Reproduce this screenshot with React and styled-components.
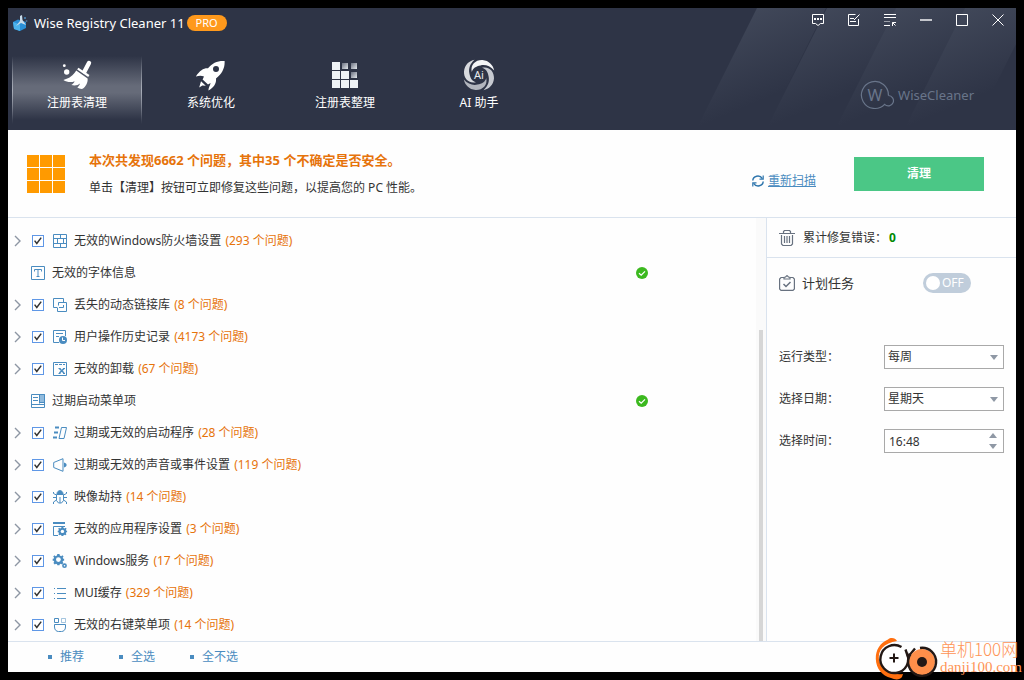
import React, { useState } from "react";
import styled, { createGlobalStyle, ThemeProvider, css } from "styled-components";

const theme = {
  colorHeader: "#2e3446",
  colorText: "#333333",
  colorOrange: "#e6730a",
  colorBlue: "#4a8cc0",
  colorLine: "#dae3ee",
  colorGreen: "#4bc786",
  colorGrey: "#687280",
  font: '"Noto Sans", "Noto Sans CJK SC", sans-serif',
};

const ITEMS = [
  { id: "firewall", title: "无效的Windows防火墙设置", count: 293 },
  { id: "font", title: "无效的字体信息" },
  { id: "dll", title: "丢失的动态链接库", count: 8 },
  { id: "history", title: "用户操作历史记录", count: 4173 },
  { id: "uninstall", title: "无效的卸载", count: 67 },
  { id: "startmenu", title: "过期启动菜单项" },
  { id: "startup", title: "过期或无效的启动程序", count: 28 },
  { id: "sound", title: "过期或无效的声音或事件设置", count: 119 },
  { id: "hijack", title: "映像劫持", count: 14 },
  { id: "apps", title: "无效的应用程序设置", count: 3 },
  { id: "services", title: "Windows服务", count: 17 },
  { id: "mui", title: "MUI缓存", count: 329 },
  { id: "context", title: "无效的右键菜单项", count: 14 },
];

const GEAR =
  "M-1 -5H1L1.3 -3.7L2.6 -3.1L3.6 -4L4.7 -2.9L3.9 -1.7L4.4 -.7H5.2V1H4.3L3.8 2L4.5 3.2L3.3 4.4L2.2 3.7L1.2 4.2L1 5.2H-1L-1.2 4.2L-2.2 3.7L-3.3 4.4L-4.5 3.2L-3.8 2L-4.3 1H-5.2V-.7H-4.4L-3.9 -1.7L-4.7 -2.9L-3.6 -4L-2.6 -3.1L-1.3 -3.7Z";

const itemIcons = {
  firewall: (
    <path d="M.5 .5H13.5V13.5H.5ZM.5 4.5H13.5M.5 9.5H13.5M7.5 .5V4.5M4.5 4.5V9.5M10.5 4.5V9.5M7.5 9.5V13.5" />
  ),
  font: (
    <>
      <path d="M.5 .5H13.5V13.5H.5Z" />
      <path d="M3.5 5.5V3.5H10.5V5.5M7 3.5V10.5M5.5 10.5H8.5" />
    </>
  ),
  dll: (
    <path d="M4 9.5H.5V.5H10.5V4.5M5.5 4.5H13.5V13.5H4.5V9.5M6 9.5H10.5V7M5.5 4.5V7.5" />
  ),
  history: (
    <>
      <path d="M6 12.5H.5V.5H12.5V6M3 3.5H10M3 6.5H6" />
      <circle cx="10" cy="10" r="4" fill="currentColor" stroke="none" />
      <path d="M9.5 7.5V10.5H12" stroke="#fff" />
    </>
  ),
  uninstall: (
    <>
      <path d="M.5 .5H13.5V13.5H.5ZM2 2.5H5M6 2.5H9M10 2.5H12" />
      <path d="M6.5 6.5L11 11M11 6.5L6.5 11" strokeWidth="1.6" />
      <path d="M5.5 6.5H7.500M10 6.500H12M5.500 11.500H7.500M10 11.500H12" />
    </>
  ),
  startmenu: (
    <>
      <path d="M8.5 .5H13.5V8.5H8.5Z" fill="#91bbdd" />
      <path d="M.5 .5H13.5V13.5H.5ZM8.5 .5V9.5M.5 10.5H13.5M2 3.5H7M2 6.5H7" />
    </>
  ),
  startup: (
    <>
      <path d="M2 1.5H6M1 6.5H5M0 11.5H4" strokeWidth="2" />
      <path d="M8.5 1.5H13.5L11 12.5H6Z" />
    </>
  ),
  sound: (
    <>
      <path d="M.7 4.5L10 .7V13.3L.7 9.5Z" />
      <path d="M11 4.5C14.5 5.5 14.5 8.5 11 9.5Z" fill="currentColor" stroke="none" />
    </>
  ),
  hijack: (
    <>
      <path d="M4 4C4 -.5 10 -.5 10 4Z" fill="currentColor" />
      <path d="M3.5 4.5H10.5V10.5L8.5 13H5.5L3.5 10.5ZM7 7V13M.5 2V3.5L3.5 5M13.5 2V3.5L10.5 5M0 7.5H3.5M10.5 7.5H14M3.5 10L.5 12V14M10.5 10L13.5 12V14" />
    </>
  ),
  apps: (
    <>
      <path d="M0 1H12" strokeWidth="2" />
      <path d="M5 13.5H.5V4.5H12" />
      <path d={GEAR} transform="translate(9.4 9.4) scale(.9)" fill="currentColor" stroke="none" />
      <circle cx="9.4" cy="9.4" r="1.7" fill="#fff" stroke="none" />
    </>
  ),
  services: (
    <>
      <path d={GEAR} transform="translate(5.4 5.6) scale(1.1)" fill="currentColor" stroke="none" />
      <circle cx="5.4" cy="5.6" r="2.4" fill="#fff" stroke="none" />
      <circle cx="11.5" cy="11.7" r="1.6" strokeWidth="1.6" />
    </>
  ),
  mui: (
    <>
      <path d="M4 2.5H13M4 7.5H13M4 12.5H13" />
      <path d="M1 2.5H2M1 7.5H2M1 12.5H2" />
    </>
  ),
  context: (
    <>
      <path d="M1.5 .5H5.5V4.5H1.5Z" />
      <path d="M8.5 .5H12.5V4.5H8.5Z" opacity=".5" />
      <path d="M1.5 6.5H12.5V9C12.5 12 10.5 13.5 8.5 13.5H5.5C3.5 13.5 1.5 12 1.5 9Z" />
    </>
  ),
};

const CleanIcon = () => (
  <svg width="30" height="30" viewBox="0 0 30 30" fill="#fff">
    <circle cx="4.7" cy="12" r="2.7" />
    <circle cx="2.3" cy="5.7" r="1.4" />
    <path d="M27 3L22.5 11.5" stroke="#fff" strokeWidth="4.4" strokeLinecap="round" />
    <path d="M15.8 8.6L26.8 16" stroke="#fff" strokeWidth="2.2" />
    <path d="M14.2 10.6L25.6 18.4C26.2 22.5 23.5 26.5 20.7 28.8C19 29.2 17 28.6 15.3 27.6C16.8 26.4 17.7 25 18 23.6C16 25.4 12.5 26 9.3 25C11 24 12 22.8 12.6 21.2C9.5 22.6 5 22.4 1.4 20C7 18.8 11.5 15.5 14.2 10.6Z" />
  </svg>
);

const RocketIcon = () => (
  <svg width="30" height="32" viewBox="0 0 30 32" fill="#fff">
    <path
      fillRule="evenodd"
      d="M28.6 2C22 1.5 16 4 12 9.3C7.5 9 3.8 11.5 -.2 17.6C2.6 16.4 5.4 16.4 8 17.4L6.6 20.4L12 25.4L14.6 24C14.2 26.6 12.4 28.6 12.4 31.4C18 28.4 20.6 24 20 19.4C26 15 29 9 28.6 2ZM20 7A3 3 0 1 1 20 13A3 3 0 1 1 20 7Z"
    />
    <path d="M5 22.2L9.8 26.8L6.4 26.4L3.2 28.6Z" />
  </svg>
);

const BlocksIcon = () => (
  <svg width="26" height="26" viewBox="0 0 26 26" fill="#eef2f6">
    <defs>
      <linearGradient id="block" x1="0" y1="0" x2="1" y2="1">
        <stop offset="0" stopColor="#6a7080" />
        <stop offset="1" stopColor="#e4e8ec" />
      </linearGradient>
    </defs>
    <path d="M0 0H8V8H0ZM0 9H8V17H0ZM9 9H17V17H9ZM0 18H8V26H0ZM9 18H17V26H9ZM18 18H26V26H18Z" />
    <rect x="10" y="1" width="6" height="6" fill="url(#block)" />
    <rect x="19" y="1" width="6" height="6" fill="url(#block)" />
    <rect x="19" y="10" width="6" height="6" fill="url(#block)" />
  </svg>
);

const AiIcon = () => {
  const blade =
    "M-7.2 -3C-9 -10.5 -3 -15.4 3.5 -15C10 -14.4 14 -10 15.2 -4.5C11 -9 6.5 -10.6 1.5 -9.6C-3 -8.8 -6.2 -7 -7.2 -3Z";
  return (
    <svg width="32" height="32" viewBox="-16 -16 32 32">
      <path d={blade} fill="#f4f5f7" />
      <path d={blade} fill="#c6c9d0" transform="rotate(90)" />
      <path d={blade} fill="#b2b5bd" transform="rotate(180)" />
      <path d={blade} fill="#d8dade" transform="rotate(270)" />
      <text x="0" y="4" textAnchor="middle" fontSize="11" fill="#e8eaee">
        Ai
      </text>
    </svg>
  );
};

const NAV = [
  { id: "clean", label: "注册表清理", icon: <CleanIcon /> },
  { id: "tune", label: "系统优化", icon: <RocketIcon /> },
  { id: "defrag", label: "注册表整理", icon: <BlocksIcon /> },
  { id: "ai", label: "AI 助手", icon: <AiIcon /> },
];

const WINDOW_BUTTONS = [
  {
    label: "反馈",
    icon: (
      <>
        <path d="M.5 .5H11.5V9.5H8.5L6 11.5L3.5 9.5H.5Z" />
        <path d="M2 5H4M5 5H7M8 5H10" strokeWidth="2" />
      </>
    ),
  },
  {
    label: "日志",
    icon: <path d="M7.5 .5H.5V11.5H10.5V5M2 4.5H6M2 7.5H8M6 6L11.5 .5" />,
  },
  {
    label: "菜单",
    icon: (
      <>
        <path d="M0 .5H12M0 3.5H12M0 11.5H6M8.5 12V8.5H12M8.5 8.5L11.5 11.5" />
        <path d="M0 7.5H6" opacity=".5" />
      </>
    ),
  },
  { label: "最小化", icon: <path d="M0 6H12" strokeWidth="2" stroke="#c4c6cc" /> },
  { label: "最大化", icon: <path d="M.5 .5H11.5V11.5H.5Z" /> },
  { label: "关闭", icon: <path d="M.5 .5L11.5 11.5M11.5 .5L.5 11.5" /> },
];

const HeaderRays = () => (
  <Rays width="326" height="122" viewBox="0 0 326 122" aria-hidden="true">
    <defs>
      {[67, 137, 206, 275].map((x) => (
        <linearGradient
          key={x}
          id={`ray${x}`}
          gradientUnits="userSpaceOnUse"
          x1={x}
          y1="0"
          x2={x + 34}
          y2="80"
        >
          <stop offset="0" stopColor="#7a8494" stopOpacity=".24" />
          <stop offset="1" stopColor="#7a8494" stopOpacity="0" />
        </linearGradient>
      ))}
    </defs>
    {[67, 137, 206, 275].map((x) => (
      <path key={x} d={`M${x} 0H${x + 69}L${x + 8} 122H${x - 61}Z`} fill={`url(#ray${x})`} />
    ))}
  </Rays>
);

const Header = () => {
  const [active, setActive] = useState("clean");

  return (
    <StyledHeader>
      <HeaderRays />
      <TitleBar>
        <AppTitle>
          <svg width="15" height="16" viewBox="0 0 15 16">
            <path d="M0 7L5 4.500L13 7V13L7 16L1 14Z" fill="#2a8fd6" />
            <path d="M0 7L7 9.500V16L1 14Z" fill="#4db4ec" />
            <path d="M7 1L9 0L9.500 5L13 10L8 8L3 11L7 6Z" fill="#c9dbe9" />
            <circle cx="12" cy="3" r="1" fill="#4a8cc0" />
            <circle cx="13.5" cy="6" r="1" fill="#4f6f96" />
          </svg>
          <h1>Wise Registry Cleaner 11</h1>
          <ProBadge>PRO</ProBadge>
        </AppTitle>
        <WindowControls>
          {WINDOW_BUTTONS.map(({ label, icon }) => (
            <WindowButton key={label} aria-label={label}>
              <svg width="12" height="12" viewBox="0 0 12 12" fill="none" stroke="#fff">
                {icon}
              </svg>
            </WindowButton>
          ))}
        </WindowControls>
      </TitleBar>
      <NavBar>
        {NAV.map(({ id, label, icon }) => (
          <NavButton key={id} $active={id === active} onClick={() => setActive(id)}>
            <NavIcon>{icon}</NavIcon>
            {label}
          </NavButton>
        ))}
        <Brand>
          <svg width="35" height="30" viewBox="0 0 35 30" fill="none" stroke="#69758a">
            <path d="M28.4 15.5A13.5 13.5 0 1 0 24.6 24.4A5.2 5.2 0 1 0 28.4 15.5" strokeWidth="1.2" />
            <text x="15" y="21" textAnchor="middle" fontSize="16" fill="#69758a" stroke="none">
              W
            </text>
          </svg>
          WiseCleaner
        </Brand>
      </NavBar>
    </StyledHeader>
  );
};

const Summary = () => (
  <StyledSummary>
    <svg width="38" height="38" viewBox="0 0 38 38" fill="#ff9a00">
      {[0, 13, 26].map((y) =>
        [0, 13, 26].map((x) => <rect key={`${x}-${y}`} x={x} y={y} width="12" height="12" />)
      )}
    </svg>
    <SummaryText>
      <h2>本次共发现6662 个问题，其中35 个不确定是否安全。</h2>
      <p>单击【清理】按钮可立即修复这些问题，以提高您的 PC 性能。</p>
    </SummaryText>
    <RescanLink href="#rescan">
      <svg width="12" height="12" viewBox="0 0 12 12" fill="none" stroke="#2f76ad" strokeWidth="1.5">
        <path d="M.8 5.5C1 1 7.5 -.8 10.4 3.6M11.2 6.5C11 11 4.5 12.8 1.6 8.4" />
        <path d="M11.2 .5V4.2H7.5M.8 11.5V7.8H4.5" strokeWidth="1.2" />
      </svg>
      <span>重新扫描</span>
    </RescanLink>
    <CleanButton>清理</CleanButton>
  </StyledSummary>
);

const ProblemRow = ({ item, checked, onToggle }) => {
  const icon = (
    <ItemIcon width="14" height="14" viewBox="0 0 14 14" aria-hidden="true">
      {itemIcons[item.id]}
    </ItemIcon>
  );

  if (!item.count) {
    return (
      <Row $clean>
        <RowLabel as="span">
          {icon}
          {item.title}
        </RowLabel>
        <DoneMark width="12" height="12" viewBox="0 0 12 12">
          <circle cx="6" cy="6" r="6" fill="#3cb91f" />
          <path d="M3 6.2L5.2 8.2L9 4.4" fill="none" stroke="#fff" strokeWidth="1.3" />
        </DoneMark>
      </Row>
    );
  }

  return (
    <Row>
      <ExpandButton aria-label="展开">
        <svg width="7" height="12" viewBox="0 0 7 12" fill="none" stroke="#8d96a3" strokeWidth="1.4">
          <path d="M1 1L6 6L1 11" />
        </svg>
      </ExpandButton>
      <Overlap>
        <Checkbox id={item.id} checked={checked} onChange={onToggle} />
        {checked && (
          <CheckMark width="12" height="12" viewBox="0 0 12 12">
            <path d="M2.6 5.6L4.8 8.4L9.2 2.6" fill="none" stroke="#333" strokeWidth="1.5" />
          </CheckMark>
        )}
      </Overlap>
      <RowLabel htmlFor={item.id}>
        {icon}
        <span>
          {item.title} <Count>({item.count} 个问题)</Count>
        </span>
      </RowLabel>
    </Row>
  );
};

const SidePanel = () => {
  const [scheduled, setScheduled] = useState(false);

  return (
    <StyledSidePanel>
      <FixedTotal>
        <svg width="16" height="16" viewBox="0 0 16 16" fill="none" stroke="#687280">
          <path d="M0 3.5H16M4.5 3V1.5L5.5 .5H10.5L11.5 1.5V3M2.5 5V14L4 15.5H12L13.5 14V5" strokeWidth="1.2" />
          <path d="M5.5 6V13M8 6V13M10.5 6V13" strokeWidth="1.2" />
        </svg>
        <span>累计修复错误：</span>
        <strong>0</strong>
      </FixedTotal>
      <ScheduleRow>
        <svg width="16" height="16" viewBox="0 0 16 16" fill="none" stroke="#687280" strokeWidth="1.2">
          <path d="M5 2.5H2L.6 4V14L2 15.4H14L15.4 14V4L14 2.5H11M5 4H11V2.5L9.5 2L8 .6L6.5 2L5 2.5Z" />
          <path d="M4.5 9L7 11.5L11.5 7" strokeWidth="1.5" />
        </svg>
        <span id="schedule">计划任务</span>
        <Switch>
          <input
            type="checkbox"
            role="switch"
            aria-labelledby="schedule"
            checked={scheduled}
            onChange={() => setScheduled(!scheduled)}
          />
          {scheduled ? "ON" : "OFF"}
        </Switch>
      </ScheduleRow>
      <ScheduleForm>
        <label htmlFor="type">运行类型：</label>
        <Overlap>
          <Select id="type" defaultValue="每周">
            <option>每天</option>
            <option>每周</option>
            <option>每月</option>
          </Select>
          <SelectArrow width="8" height="5" viewBox="0 0 8 5">
            <path d="M0 0H8L4 5Z" />
          </SelectArrow>
        </Overlap>
        <label htmlFor="day">选择日期：</label>
        <Overlap>
          <Select id="day" defaultValue="星期天">
            <option>星期一</option>
            <option>星期天</option>
          </Select>
          <SelectArrow width="8" height="5" viewBox="0 0 8 5">
            <path d="M0 0H8L4 5Z" />
          </SelectArrow>
        </Overlap>
        <label htmlFor="time">选择时间：</label>
        <Overlap>
          <TimeInput id="time" defaultValue="16:48" />
          <Spinner>
            <button aria-label="增加">
              <svg width="8" height="5" viewBox="0 0 8 5">
                <path d="M4 0L8 5H0Z" />
              </svg>
            </button>
            <button aria-label="减少">
              <svg width="8" height="5" viewBox="0 0 8 5">
                <path d="M0 0H8L4 5Z" />
              </svg>
            </button>
          </Spinner>
        </Overlap>
      </ScheduleForm>
    </StyledSidePanel>
  );
};

const SiteMark = () => (
  <StyledSiteMark>
    <svg width="66" height="44" viewBox="0 0 66 44" fill="none">
      <path
        d="M14 3.500C6 7 1.500 14 1.800 23C2.200 33 8 39.500 17 42C21 44 26 44 28 41L29 38C19 39.600 7 34 5 24C3.600 14 10 7 23 5C21.600 2 17 1 14 3.500Z"
        fill="#ff6f0f"
      />
      <circle cx="20" cy="22" r="14" fill="#fff" />
      <path d="M27.500 11A14 14 0 1 0 33 17" stroke="#231815" strokeWidth="2.4" />
      <path d="M31.500 13.500L34 21L41 12.500" stroke="#231815" strokeWidth="2.4" />
      <path d="M20 17.500V26.500M15.500 22H24.500" stroke="#231815" strokeWidth="2" />
      <circle cx="48" cy="26" r="13" fill="#ff8f4a" />
      <path d="M46 12A14 14 0 1 1 36.500 18" stroke="#231815" strokeWidth="2.4" />
      <circle cx="48" cy="26" r="5" fill="#231815" />
    </svg>
    <SiteName>
      <strong>单机100网</strong>
      <span>danji100.com</span>
    </SiteName>
  </StyledSiteMark>
);

const App = () => {
  const allIds = ITEMS.map(({ id }) => id);
  const [selected, setSelected] = useState(allIds);

  const toggle = (id) =>
    setSelected(selected.includes(id) ? selected.filter((s) => s !== id) : [...selected, id]);

  return (
    <ThemeProvider theme={theme}>
      <GlobalStyle />
      <Desktop>
        <AppWindow>
          <Header />
          <Summary />
          <Content>
            <ProblemList>
              {ITEMS.map((item) => (
                <ProblemRow
                  key={item.id}
                  item={item}
                  checked={selected.includes(item.id)}
                  onToggle={() => toggle(item.id)}
                />
              ))}
            </ProblemList>
            <ScrollTrack>
              <ScrollThumb />
            </ScrollTrack>
            <SidePanel />
          </Content>
          <Footer>
            <FooterButton onClick={() => setSelected(allIds)}>推荐</FooterButton>
            <FooterButton onClick={() => setSelected(allIds)}>全选</FooterButton>
            <FooterButton onClick={() => setSelected([])}>全不选</FooterButton>
          </Footer>
        </AppWindow>
        <SiteMark />
      </Desktop>
    </ThemeProvider>
  );
};

export default App;

const GlobalStyle = createGlobalStyle`
  * {
    box-sizing: border-box;
  }
  body {
    margin: 0;
    background: #000;
    font-family: ${({ theme }) => theme.font};
    font-size: 12px;
    line-height: 20px;
    color: ${({ theme }) => theme.colorText};
  }
  h1, h2, p {
    margin: 0;
  }
  svg {
    display: block;
    flex: none;
  }
  button, input, select {
    margin: 0;
    font: inherit;
    color: inherit;
  }
  button {
    padding: 0;
    border: 0;
    background: none;
    cursor: pointer;
  }
`;

const Desktop = styled.div`
  position: relative;
  display: flex;
  min-height: 100vh;
  padding: 8px;
`;

const AppWindow = styled.main`
  flex: 1;
  display: flex;
  flex-direction: column;
  min-width: 0;
  background: #fefefe;
`;

const StyledHeader = styled.header`
  position: relative;
  padding-bottom: 6px;
  background: ${({ theme }) => theme.colorHeader};
  color: #fff;
`;

const Rays = styled.svg`
  position: absolute;
  top: 0;
  right: 0;
`;

const TitleBar = styled.div`
  position: relative;
  display: flex;
  justify-content: space-between;
  align-items: flex-start;
`;

const AppTitle = styled.div`
  display: flex;
  align-items: center;
  height: 30px;
  padding-left: 5px;

  h1 {
    margin: 0 2px 0 6px;
    font-size: 13px;
    font-weight: 400;
  }
`;

const ProBadge = styled.span`
  width: 40px;
  border-radius: 8px;
  background: #ff991c;
  font-size: 11px;
  line-height: 16px;
  text-align: center;
`;

const WindowControls = styled.div`
  display: flex;
`;

const WindowButton = styled.button`
  display: grid;
  place-items: center;
  width: 36px;
  height: 24px;
`;

const NavBar = styled.nav`
  position: relative;
  display: flex;
  gap: 4px;
  padding: 18px 42px 0 4px;
`;

const NavButton = styled.button`
  display: flex;
  flex-direction: column;
  align-items: center;
  gap: 2px;
  width: 130px;
  height: 68px;
  padding-top: 3px;
  color: #fff;

  ${({ $active }) =>
    $active &&
    css`
      background: linear-gradient(transparent, #a8adb8, transparent) left / 1px 100% no-repeat,
        linear-gradient(transparent, #a8adb8, transparent) right / 1px 100% no-repeat,
        linear-gradient(transparent, #666b79 44%, #666b79 54%, transparent 94%);
    `}
`;

const NavIcon = styled.span`
  display: grid;
  place-items: center;
  height: 32px;
`;

const Brand = styled.div`
  display: flex;
  align-items: center;
  gap: 3px;
  margin-left: auto;
  padding-top: 10px;
  font-size: 13px;
  color: #69758a;
`;

const StyledSummary = styled.section`
  display: flex;
  align-items: center;
  height: 88px;
  padding: 0 32px 0 19px;
  border-bottom: 1px solid ${({ theme }) => theme.colorLine};
`;

const SummaryText = styled.div`
  flex: 1;
  padding-left: 24px;
  line-height: 27px;

  h2 {
    font-size: 13px;
    color: ${({ theme }) => theme.colorOrange};
  }
`;

const RescanLink = styled.a`
  display: flex;
  align-items: center;
  gap: 4px;
  margin-right: 38px;
  padding-top: 14px;
  color: ${({ theme }) => theme.colorBlue};
`;

const CleanButton = styled.button`
  width: 130px;
  height: 34px;
  background: ${({ theme }) => theme.colorGreen};
  font-weight: 700;
  color: #fff;
`;

const Content = styled.div`
  flex: 1;
  display: flex;
`;

const ProblemList = styled.ul`
  flex: 1;
  margin: 0;
  padding: 7px 0 0;
  list-style: none;
`;

const Row = styled.li`
  display: flex;
  align-items: center;
  height: 32px;
  padding: 0 108px 0 ${({ $clean }) => ($clean ? "23px" : "0")};
`;

const ExpandButton = styled.button`
  width: 24px;
  height: 24px;
  padding-left: 6px;
`;

/* stacks a control and its mark in one cell */
const Overlap = styled.div`
  display: grid;
  align-items: center;

  > * {
    grid-area: 1 / 1;
  }
`;

const Checkbox = styled.input.attrs({ type: "checkbox" })`
  appearance: none;
  width: 12px;
  height: 12px;
  border: 1px solid #5f97e6;
  background: #fff;
`;

const CheckMark = styled.svg`
  pointer-events: none;
`;

const RowLabel = styled.label`
  display: flex;
  align-items: center;
  gap: 7px;

  ${Overlap} + & {
    padding-left: 9px;
  }
`;

const ItemIcon = styled.svg`
  overflow: visible;
  fill: none;
  stroke: currentColor;
  color: ${({ theme }) => theme.colorBlue};
`;

const Count = styled.span`
  margin-left: 1px;
  color: ${({ theme }) => theme.colorOrange};
`;

const DoneMark = styled.svg`
  margin-left: auto;
`;

const ScrollTrack = styled.div`
  display: flex;
  width: 10px;
  padding: 112px 3px 0;
  background: #fafafa;
`;

const ScrollThumb = styled.div`
  flex: 1;
  background: #d6d6d6;
`;

const StyledSidePanel = styled.aside`
  width: 250px;
  border-left: 1px solid ${({ theme }) => theme.colorLine};
`;

const FixedTotal = styled.div`
  display: flex;
  align-items: center;
  height: 40px;
  padding-left: 12px;
  border-bottom: 1px solid ${({ theme }) => theme.colorLine};

  span {
    padding-left: 8px;
  }
  strong {
    padding-left: 2px;
    color: #008a00;
  }
`;

const ScheduleRow = styled.div`
  display: flex;
  align-items: center;
  gap: 7px;
  height: 50px;
  padding: 0 45px 0 12px;
  font-size: 13px;
`;

const Switch = styled.label`
  display: flex;
  align-items: center;
  gap: 2px;
  width: 48px;
  height: 20px;
  margin-left: auto;
  padding-left: 3px;
  border-radius: 10px;
  background: #c0cddb;
  font-size: 12px;
  color: #fff;

  input {
    appearance: none;
    width: 14px;
    height: 14px;
    border-radius: 50%;
    background: #fff;
  }
`;

const ScheduleForm = styled.form`
  display: grid;
  grid-template-columns: 1fr 120px;
  align-items: center;
  gap: 18px 0;
  padding: 37px 12px 0;
`;

const field = css`
  width: 100%;
  height: 24px;
  padding: 0 4px;
  border: 1px solid #a9a9a9;
  border-radius: 0;
  background: #fff;
`;

const Select = styled.select`
  ${field}
  appearance: none;
  padding: 0 3px;
`;

const TimeInput = styled.input`
  ${field}
`;

const SelectArrow = styled.svg`
  justify-self: end;
  margin-right: 6px;
  fill: #8f98a5;
  pointer-events: none;
`;

const Spinner = styled.div`
  display: grid;
  gap: 6px;
  justify-self: end;
  margin-right: 7px;
  fill: #8f98a5;
`;

const Footer = styled.footer`
  display: flex;
  gap: 35px;
  height: 31px;
  padding-left: 40px;
  border-top: 1px solid ${({ theme }) => theme.colorLine};
`;

const FooterButton = styled.button`
  display: flex;
  align-items: center;
  gap: 8px;
  color: ${({ theme }) => theme.colorBlue};

  &::before {
    content: "";
    width: 4px;
    height: 4px;
    background: currentColor;
  }
`;

const StyledSiteMark = styled.div`
  position: absolute;
  right: 2px;
  bottom: 0;
  display: flex;
  align-items: center;
`;

const SiteName = styled.div`
  display: flex;
  flex-direction: column;
  line-height: 18px;
  color: #ff9455;

  strong {
    font-family: "Noto Sans CJK SC", sans-serif;
    font-size: 17px;
    font-weight: 300;
  }
  span {
    font-family: "Liberation Serif", serif;
    font-size: 15px;
  }
`;
